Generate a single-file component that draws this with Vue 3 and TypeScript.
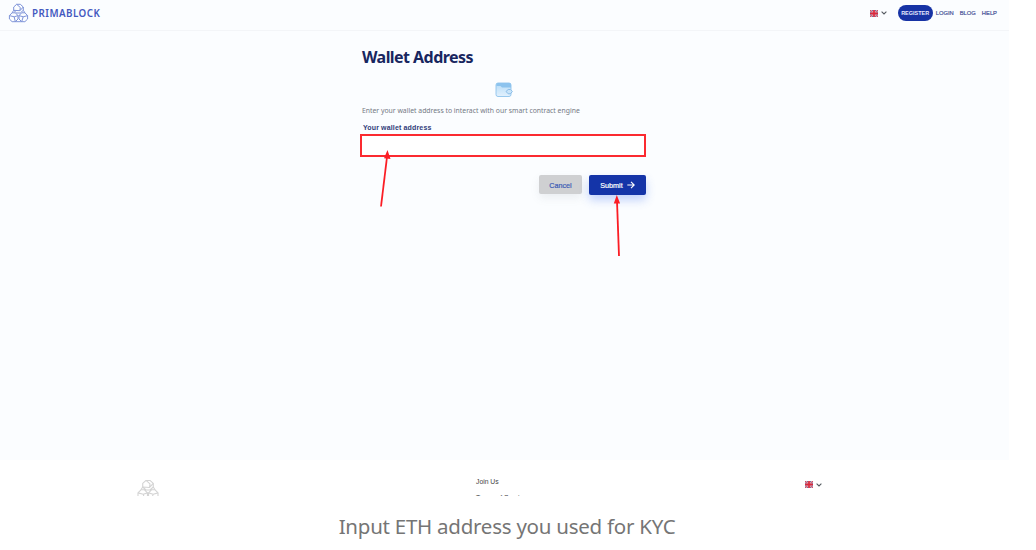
<script setup lang="ts">
import { ref } from 'vue'

const address = ref('')
const navLinks: string[] = ['LOGIN', 'BLOG', 'HELP']
</script>

<template>
  <figure class="figure">
    <div class="shot">
      <!-- shared symbols -->
      <svg class="defs" width="0" height="0">
        <symbol id="logo" viewBox="0 0 20 20">
          <g fill="none" stroke="currentColor" stroke-width="1" stroke-linejoin="round">
            <path d="M8.200 1.300h3.600l3 2.700v3.300l-3 2.700H8.200l-3-2.700V4zM3.600 9.800h3.200l2.700 2.800v3.400l-2.700 2.700H3.600L.9 16v-3.400zM13.200 9.800h3.200l2.700 2.800v3.400l-2.700 2.700h-3.200L10.500 16v-3.400z" />
            <path d="M8.200 1.300l3.600 3.200-.4 3.200M5.200 7.300l6.200.4 3.400-3.700M.9 12.600l4.800 1.200 1.100 4.900M5.700 13.800l3.800-1.200M10.500 12.600l4.200 1.200-1.500 4.900M14.700 13.800l4.400-1.200M3.600 9.800l1.600-2.500M16.400 9.800l-1.600-2.500M6.800 18.700h6.400" />
          </g>
        </symbol>
        <symbol id="flag" viewBox="0 0 8 7">
          <path fill="#6a6e9e" d="M0 0h8v7H0z" />
          <path stroke="#efdde5" stroke-width="1.5" d="M0 0l8 7M8 0L0 7" />
          <path stroke="#dc4557" stroke-width="1" d="M0 0l8 7M8 0L0 7" />
          <path stroke="#e2808f" stroke-width="2.2" d="M4 0v7M0 3.500h8" />
          <path stroke="#d9283c" stroke-width="1.5" d="M4 0v7M0 3.500h8" />
        </symbol>
        <symbol id="chevron" viewBox="0 0 6 4">
          <path d="M.6.7L3 3 5.400.7" fill="none" stroke="currentColor" stroke-width="1.1" />
        </symbol>
      </svg>

      <header class="header">
        <div class="brand">
          <svg class="brand-icon"><use href="#logo" /></svg>
          <span class="brand-name">PRIMABLOCK</span>
        </div>
        <nav class="nav">
          <span class="lang">
            <svg class="flag"><use href="#flag" /></svg>
            <svg class="chevron"><use href="#chevron" /></svg>
          </span>
          <a class="register">REGISTER</a>
          <a v-for="link in navLinks" :key="link" class="nav-link">{{ link }}</a>
        </nav>
      </header>

      <main class="main">
        <form class="form" @submit.prevent>
          <h1 class="title">Wallet Address</h1>
          <svg class="wallet" viewBox="0 0 18 16">
            <defs>
              <linearGradient id="wallet-fill" x1="0" y1="0" x2="0" y2="1">
                <stop offset="0" stop-color="#b5dbf7" />
                <stop offset="1" stop-color="#e2f1fd" />
              </linearGradient>
            </defs>
            <rect x="1" y="1" width="15" height="13.500" rx="2" fill="url(#wallet-fill)" stroke="#8fc3ec" stroke-width="0.9" />
            <path d="M1.500 3.500V2.500Q1.500 1 3 1h11.500q1.500 0 1.500 2v2.500H7L5.500 4h-4z" fill="#8cc3ee" />
            <path d="M11 9.500l2.200-2h2.200l2 2-2 2.300h-2.200z" fill="#c9e4f9" stroke="#82b8e5" stroke-width="0.9" />
          </svg>
          <p class="intro">Enter your wallet address to interact with our smart contract engine</p>
          <label class="label" for="wallet-address">Your wallet address</label>
          <input id="wallet-address" v-model="address" class="input" type="text" />
          <div class="actions">
            <button class="btn cancel" type="button">Cancel</button>
            <button class="btn submit" type="submit">
              Submit
              <svg class="arrow" viewBox="0 0 8 8">
                <path d="M.3 4h6.800M4 .8L7.200 4 4 7.200" fill="none" stroke="#fff" stroke-width="1.1" />
              </svg>
            </button>
          </div>
        </form>
      </main>

      <footer class="footer">
        <svg class="footer-logo"><use href="#logo" /></svg>
        <div class="footer-links">
          <a>Join Us</a>
          <a>Terms of Service</a>
        </div>
        <span class="lang footer-lang">
          <svg class="flag"><use href="#flag" /></svg>
          <svg class="chevron"><use href="#chevron" /></svg>
        </span>
      </footer>

      <!-- red pointers over the form -->
      <svg class="pointers" viewBox="0 0 1013 496">
        <g stroke="#fb1d25" stroke-width="1.800" fill="#fb1d25">
          <path d="M381 206.500L387 157" />
          <path d="M619 256L617 201" />
          <path stroke="none" d="M387.500 150l3 9-6.500-.700zM616.800 195l3.300 8.500h-6.300z" />
        </g>
      </svg>
    </div>
    <figcaption class="caption">Input ETH address you used for KYC</figcaption>
  </figure>
</template>

<style>
body {
  margin: 0;
  background: #fff;
}
</style>

<style scoped>
.figure {
  margin: 0;
  height: 550px;
  overflow: hidden;
  font-family: "Noto Sans", "Open Sans", sans-serif;
}
.shot {
  position: relative;
  width: 1009px;
  height: 496px;
  overflow: hidden;
  display: flex;
  flex-direction: column;
  background: #fbfdff;
}
.defs { position: absolute; }
.header {
  box-sizing: border-box;
  flex: none;
  height: 31px;
  padding: 0 12px 4px 8px;
  display: flex;
  align-items: center;
  justify-content: space-between;
  border-bottom: 1px solid #f3f5f8;
}
.brand {
  display: flex;
  align-items: center;
  gap: 3px;
  color: #4459c0;
}
.brand-icon { width: 21px; height: 20px; color: #7e93d8; }
.brand-name {
  padding-top: 2px;
  font-size: 9.800px;
  line-height: 12px;
  font-weight: 600;
  letter-spacing: 0.480px;
}
.nav {
  display: flex;
  align-items: center;
  font-family: "Liberation Sans", sans-serif;
  font-size: 5.800px;
  color: #4a5599;
}
.nav-link { -webkit-text-stroke: 0.2px #4a5599; }
.lang {
  display: flex;
  align-items: center;
  gap: 3px;
  color: #555a60;
}
.flag { width: 8px; height: 7px; }
.chevron { width: 6px; height: 4px; }
.register {
  width: 35px;
  height: 16px;
  margin-left: 11px;
  border-radius: 8px;
  background: #1733a5;
  color: #e6eaff;
  font-size: 5.500px;
  font-weight: bold;
  line-height: 16px;
  text-align: center;
}
.nav-link { margin-left: 6px; }
.register + .nav-link { margin-left: 3px; }
.main {
  flex: none;
  height: 429px;
  display: flex;
}
.form {
  width: 286px;
  margin-left: 360px;
  display: flex;
  flex-direction: column;
}
.title {
  margin: 15px 0 0 2px;
  font-size: 16px;
  line-height: 22px;
  font-weight: 700;
  letter-spacing: -0.55px;
  color: #18265f;
}
.wallet {
  width: 18px;
  height: 16px;
  margin: 14px 0 0 135px;
}
.intro {
  margin: 8px 0 0 2px;
  font-size: 6.850px;
  line-height: 10px;
  color: #747984;
  white-space: nowrap;
}
.label {
  margin: 7px 0 0 3px;
  font-family: "Liberation Sans", sans-serif;
  font-size: 7px;
  line-height: 10px;
  font-weight: bold;
  letter-spacing: 0.15px;
  color: #303c79;
}
.input {
  box-sizing: border-box;
  width: 286px;
  height: 23px;
  margin: 1px 0 0;
  padding: 0 8px;
  border: 2px solid #fb2a30;
  background: #fff;
  font-size: 8px;
  outline: none;
}
.actions {
  display: flex;
  justify-content: flex-end;
  gap: 7px;
  margin-top: 18px;
}
.btn {
  display: flex;
  align-items: center;
  justify-content: center;
  padding: 0;
  border: 0;
  border-radius: 2px;
  font-family: "Liberation Sans", sans-serif;
  font-size: 7.200px;
}
.cancel {
  width: 43px;
  height: 19px;
  padding-top: 1px;
  background: #cfd0d2;
  color: #3c5bb5;
  -webkit-text-stroke: 0.2px #3c5bb5;
  box-shadow: 0 4px 8px rgba(120, 130, 150, 0.12);
}
.submit {
  width: 57px;
  height: 20px;
  gap: 4px;
  background: #1434a8;
  color: #fff;
  -webkit-text-stroke: 0.2px #fff;
  box-shadow: 0 5px 10px rgba(60, 110, 240, 0.3);
}
.arrow { width: 8px; height: 8px; }
.footer {
  flex: 1;
  display: flex;
  align-items: flex-start;
  background: #fff;
}
.footer-logo {
  width: 22px;
  height: 22px;
  margin: 19px 0 0 137px;
  color: #d4d4d4;
}
.footer-links {
  width: 120px;
  margin: 17px 0 0 317px;
  display: flex;
  flex-direction: column;
  gap: 6px;
  font-family: "Liberation Sans", sans-serif;
  font-size: 6.800px;
  line-height: 10px;
  color: #444;
}
.footer-links a { white-space: nowrap; }
.footer-lang { margin: 21px 0 0 209px; }
.pointers {
  position: absolute;
  left: 0;
  top: 0;
  width: 1013px;
  height: 496px;
  pointer-events: none;
}
.caption {
  width: 1014px;
  margin-top: 16px;
  font-family: "Noto Sans", sans-serif;
  font-size: 20.500px;
  letter-spacing: -0.25px;
  line-height: 28px;
  color: #757575;
  text-align: center;
}
</style>
